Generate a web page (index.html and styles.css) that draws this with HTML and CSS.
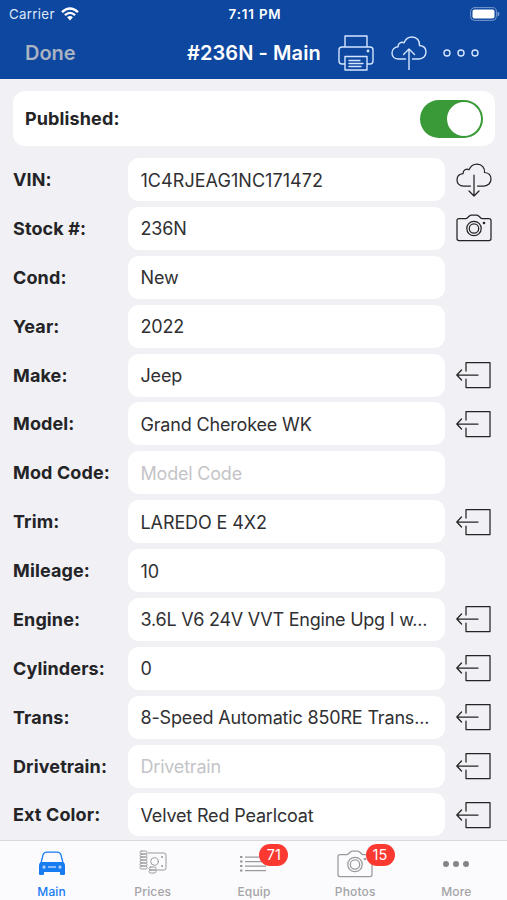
FILE: index.html
```html
<!DOCTYPE html>
<html lang="en">
<head>
<meta charset="utf-8">
<title>#236N - Main</title>
<link rel="stylesheet" href="styles.css">
</head>
<body>
<svg class="symbols" aria-hidden="true">
  <symbol id="exit" viewBox="0 0 36 28">
    <path d="M10 10V1.500h24v25H10V18M1 14H22M5.500 9 .8 14l4.700 5"/>
  </symbol>
  <symbol id="camera" viewBox="0 0 36 28">
    <path d="M3 4.500h7c2 0 3-3.500 5-3.500h6c2 0 3 3.500 5 3.500h7q2 0 2 2V24.500q0 2-2 2H3q-2 0-2-2V6.500q0-2 2-2Z"/>
    <circle cx="18" cy="14.500" r="7.200"/><circle cx="18" cy="14.500" r="4.700"/><circle class="dot" cx="28" cy="9" r=".7"/>
  </symbol>
  <symbol id="cloud" viewBox="0 0 36 34">
    <path d="M14.500 23H7.500C3.500 23 1 20.500 1 17s2.500-6 6-6.300C7 7 10.500 5.300 13 6.800 14.700 2.700 17.500 1 21 1c5 0 8 4 7.500 8.500 4 .3 6.500 3 6.500 6.600 0 4-3 6.900-7 6.900h-6.500"/>
  </symbol>
</svg>
<div class="app">
  <header class="header">
    <div class="status">
      <div class="carrier"><span>Carrier</span>
        <svg class="wifi" viewBox="0 0 18 14"><path d="M1 5.200Q9-2.200 17 5.200M3.900 8.200Q9 3.500 14.100 8.200"/><path class="solid" d="M6.100 10.300Q9 7.900 11.900 10.300L9 13.400Z"/></svg>
      </div>
      <span class="time">7:11 PM</span>
      <svg class="battery" viewBox="0 0 30 14"><rect class="shell" x=".6" y=".6" width="25.800" height="12.800" rx="4"/><rect class="charge" x="2.500" y="2.500" width="22" height="9" rx="2"/><path class="tip" d="M27.500 4.500q2 .5 2 2.500t-2 2.500Z"/></svg>
    </div>
    <nav class="nav">
      <span class="done">Done</span>
      <h1 class="title">#236N - Main</h1>
      <div class="actions">
        <svg class="printer" viewBox="0 0 36 36"><path d="M7 12V1h22v11M6.500 29H4q-3 0-3-3V15q0-3 3-3h28q3 0 3 3v11q0 3-3 3h-2.500M7 21.500h22V35H7ZM11 25.500h11M11 28.500h14M11 31.500h12"/><circle class="dot" cx="30" cy="16" r=".7"/></svg>
        <svg class="upload" viewBox="0 0 36 34"><use href="#cloud" width="36" height="34"/><path d="M18 34V13M12.500 18.500 18 13l5.500 5.500"/></svg>
        <svg class="ellipsis" viewBox="0 0 36 8"><circle cx="4" cy="4" r="3"/><circle cx="18" cy="4" r="3"/><circle cx="32" cy="4" r="3"/></svg>
      </div>
    </nav>
  </header>
  <main class="form">
    <section class="published"><span class="label">Published:</span><span class="switch"></span></section>
    <div class="row"><span class="label">VIN:</span><div class="field"><span class="vin">1C4RJEAG1NC171472</span></div><svg class="icon download" viewBox="0 0 36 34"><use href="#cloud" width="36" height="34"/><path d="M18 12v20M13 28l5 5 5-5"/></svg></div>
    <div class="row"><span class="label">Stock #:</span><div class="field"><span>236N</span></div><svg class="icon"><use href="#camera"/></svg></div>
    <div class="row"><span class="label">Cond:</span><div class="field"><span>New</span></div></div>
    <div class="row"><span class="label">Year:</span><div class="field"><span>2022</span></div></div>
    <div class="row"><span class="label">Make:</span><div class="field"><span>Jeep</span></div><svg class="icon"><use href="#exit"/></svg></div>
    <div class="row"><span class="label">Model:</span><div class="field"><span>Grand Cherokee WK</span></div><svg class="icon"><use href="#exit"/></svg></div>
    <div class="row"><span class="label">Mod Code:</span><div class="field placeholder"><span>Model Code</span></div></div>
    <div class="row"><span class="label">Trim:</span><div class="field"><span class="trim">LAREDO E 4X2</span></div><svg class="icon"><use href="#exit"/></svg></div>
    <div class="row"><span class="label">Mileage:</span><div class="field"><span>10</span></div></div>
    <div class="row"><span class="label">Engine:</span><div class="field"><span class="engine">3.6L V6 24V VVT Engine Upg I w...</span></div><svg class="icon"><use href="#exit"/></svg></div>
    <div class="row"><span class="label">Cylinders:</span><div class="field"><span>0</span></div><svg class="icon"><use href="#exit"/></svg></div>
    <div class="row"><span class="label">Trans:</span><div class="field"><span class="trans">8-Speed Automatic 850RE Trans...</span></div><svg class="icon"><use href="#exit"/></svg></div>
    <div class="row"><span class="label">Drivetrain:</span><div class="field placeholder"><span>Drivetrain</span></div><svg class="icon"><use href="#exit"/></svg></div>
    <div class="row"><span class="label">Ext Color:</span><div class="field"><span>Velvet Red Pearlcoat</span></div><svg class="icon"><use href="#exit"/></svg></div>
  </main>
  <footer class="tabs">
    <div class="tab active"><svg class="car" viewBox="0 0 28 25"><path d="M3 12 5 4Q5.700 1.300 9 1h10q3.300.3 4 3l2 8"/><path class="solid" fill-rule="evenodd" d="M4 11h20q3 0 3 4v8q0 1-1 1h-3q-1 0-1-1v-2H6v2q0 1-1 1H2q-1 0-1-1v-8q0-4 3-4Zm2 3.500a1.500 1.500 0 1 0 0 3 1.500 1.500 0 0 0 0-3Zm16 0a1.500 1.500 0 1 0 0 3 1.500 1.500 0 0 0 0-3ZM10 15.600v.8h8v-.8Z"/><circle class="solid" cx="6" cy="16" r=".7"/><circle class="solid" cx="22" cy="16" r=".7"/></svg><span>Main</span></div>
    <div class="tab"><svg class="money" viewBox="0 0 28 24"><path d="M9 3h16q2 0 2 2v13q0 2-2 2h-8"/><circle cx="15.500" cy="11.500" r="3.800"/><circle class="dot" cx="23" cy="7" r=".5"/><circle class="dot" cx="23" cy="16" r=".5"/><g><rect x="1" y="1" width="7" height="3" rx="1.500"/><rect x="1" y="4" width="7" height="3" rx="1.500"/><rect x="1" y="7" width="7" height="3" rx="1.500"/><rect x="1" y="10" width="7" height="3" rx="1.500"/><rect x="1" y="13" width="7" height="3" rx="1.500"/><rect x="1" y="16" width="7" height="3" rx="1.500"/><rect x="10" y="17" width="7" height="3" rx="1.500"/><rect x="10" y="20" width="7" height="3" rx="1.500"/></g></svg><span>Prices</span></div>
    <div class="tab"><svg class="list" viewBox="0 0 27 18"><path d="M5 2h21M5 6.500h21M5 11h21M5 15.500h21"/><path class="bullets" d="M0 2h2.500M0 6.500h2.500M0 11h2.500M0 15.500h2.500"/></svg><span>Equip</span><b class="badge">71</b></div>
    <div class="tab"><svg class="photo"><use href="#camera"/></svg><span>Photos</span><b class="badge photo-badge">15</b></div>
    <div class="tab"><svg class="more" viewBox="0 0 28 8"><circle cx="4" cy="4" r="3"/><circle cx="14" cy="4" r="3"/><circle cx="24" cy="4" r="3"/></svg><span>More</span></div>
  </footer>
</div>
</body>
</html>
```
FILE: styles.css
```css
* { box-sizing: border-box; }
body { margin: 0; font-family: Inter, "Liberation Sans", sans-serif; color: #242426; background: #f0f0f5; }
svg { display: block; flex: none; fill: none; stroke: currentColor; stroke-width: 1.25; stroke-linecap: round; stroke-linejoin: round; }
.symbols { width: 0; height: 0; position: absolute; }
.dot, .solid { fill: currentColor; }
.app { width: 507px; height: 900px; display: flex; flex-direction: column; overflow: hidden; }
.header { height: 79px; flex: none; background: #0e47a0; color: #fff; }
.status { height: 27px; display: grid; grid-template-columns: 1fr auto 1fr; align-items: center; padding: 0 7px 0 9px; font-size: 13.3px; }
.carrier { display: flex; align-items: center; gap: 6px; color: #dce8fa; letter-spacing: .3px; }
.wifi { width: 18px; height: 14px; color: #fff; stroke-width: 2.3; stroke-linecap: butt; }
.wifi .solid { stroke: none; }
.time { font-weight: 600; letter-spacing: .85px; margin-right: -1px; }
.battery { justify-self: end; width: 30px; height: 14px; stroke: none; }
.battery .shell { stroke: #779acc; stroke-width: 1; }
.battery .charge { fill: #fff; }
.battery .tip { fill: #779acc; }
.nav { height: 52px; display: grid; grid-template-columns: 187px 151px 1fr; align-items: center; }
.done { padding-left: 25px; color: #aab3c1; font-weight: 600; font-size: 20px; letter-spacing: 0; }
.title { margin: 0; font-size: 20px; line-height: 24px; font-weight: 600; white-space: nowrap; letter-spacing: .08px; }
.actions { display: flex; align-items: center; color: #d4e5ff; }
.printer { width: 36px; height: 36px; stroke-width: 1.4; }
.upload { width: 36px; height: 34px; margin-left: 17px; stroke-width: 1.4; }
.ellipsis { width: 36px; height: 8px; margin-left: 16px; stroke-width: 1.4; }
.form { flex: 1; min-height: 0; overflow: hidden; padding: 12px 12px 0 13px; }
.published { height: 55px; margin-bottom: 12px; padding: 0 12px; border-radius: 12px; background: #fff; display: flex; align-items: center; justify-content: space-between; }
.label { font-size: 18px; font-weight: 650; letter-spacing: .12px; white-space: nowrap; }
.switch { width: 63px; height: 38px; padding: 2px; border-radius: 19px; background: #399a37; display: flex; justify-content: flex-end; }
.switch::before { content: ""; width: 34px; height: 34px; border-radius: 50%; background: #fff; }
.row { height: 43px; margin-bottom: 5.88px; display: grid; grid-template-columns: 115px 317px 36px; column-gap: 0; align-items: center; }
.field { height: 43px; padding: 1px 12px 0 12.500px; border-radius: 11px; background: #fff; display: flex; align-items: center; font-size: 18px; letter-spacing: -.17px; color: #303033; white-space: nowrap; }
.placeholder { color: #c4c4c7; letter-spacing: -.2px; }
.vin { letter-spacing: .05px; }
.trim { letter-spacing: -.1px; }
.engine { letter-spacing: -.23px; }
.icon { width: 36px; height: 28px; margin-left: 11px; }
.download { height: 34px; }
.tabs { height: 60px; flex: none; border-top: 1px solid #d9d9dd; background: #fbfbfd; display: grid; grid-template-columns: repeat(5, 101.2px); padding-left: 1px; color: #9a9a9d; position: relative; }
.tab { position: relative; display: grid; grid-template-rows: 42px 16px; justify-items: center; align-items: center; font-size: 12px; font-weight: 500; letter-spacing: .15px; }
.tab > span { color: #a4a4a7; }
.active, .tab.active > span { color: #177bf2; }
.car { width: 28px; height: 25px; margin-top: 3px; }
.car .solid { stroke: none; }
.money { width: 28px; height: 24px; stroke-width: 1; }
.list { width: 27px; height: 18px; margin-top: 3px; stroke-linecap: butt; }
.bullets { stroke-width: 2; }
.photo { width: 36px; height: 28px; margin-top: 3px; }
.more { width: 28px; height: 8px; margin-top: 3px; fill: #858588; stroke: none; }
.badge { position: absolute; left: 56px; top: 3px; width: 29px; height: 22px; border-radius: 11px; background: #fb3931; color: #fff; font-size: 14.5px; font-weight: 400; line-height: 22px; text-align: center; }
.photo-badge { left: 61px; }
```
